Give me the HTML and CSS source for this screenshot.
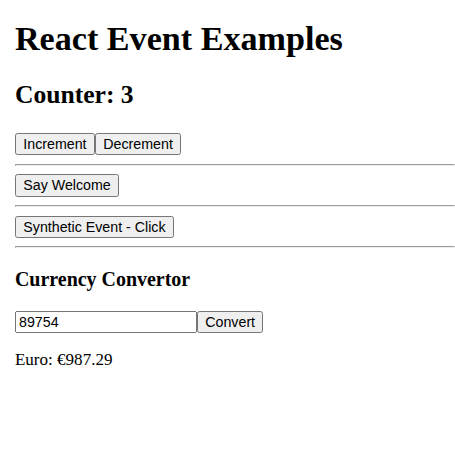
FILE: index.html
```html
<!DOCTYPE html>
<html>
<head>
<meta charset="utf-8">
<link rel="stylesheet" href="styles.css">
</head>
<body>
<div class="app">
<h1 class="title">React Event Examples</h1>
<h2 class="counter">Counter: 3</h2>
<div><button class="btn">Increment</button><button class="btn">Decrement</button></div>
<hr>
<div><button class="btn">Say Welcome</button></div>
<hr>
<div><button class="btn">Synthetic Event - Click</button></div>
<hr>
<h3>Currency Convertor</h3>
<div><input class="field" type="text" value="89754"><button class="btn">Convert</button></div>
<p>Euro: €987.29</p>
</div>
</body>
</html>
```
FILE: styles.css
```css
body {
  margin: 0;
  font-family: "Liberation Serif", "Times New Roman", serif;
  color: #000;
  background: #fff;
}
.app {
  zoom: 1.0667;
  padding-left: 14px;
  padding-top: 1px;
}
.title {
  margin-top: 17.4px;
}
.counter {
  margin-bottom: 21.3px;
}
.btn, .field {
  font-family: "Liberation Sans", Arial, sans-serif;
  font-size: 13.333px;
}
.field {
  box-sizing: border-box;
  width: 170.6px;
}
```
